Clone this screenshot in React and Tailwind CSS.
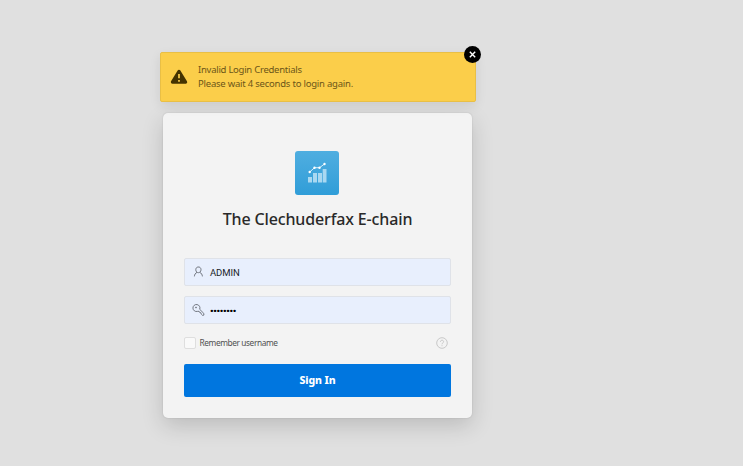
function Alert() {
  return (
    <div role="alert" className="relative flex h-[50px] w-[316px] items-center rounded-[2px] border border-[#e9bf45] bg-[#fbce4a] pl-[9px] shadow-[0_4px_12px_rgba(0,0,0,0.09)]">
      <svg width="18" height="16" viewBox="0 0 18 16" className="shrink-0">
        <path d="M9 2.4 15.6 13.1H2.4Z" fill="#443300" stroke="#443300" strokeWidth="3.2" strokeLinejoin="round" />
        <path d="M9 4.9V9.3M9 11V12.8" stroke="#fbce4a" strokeWidth="1.7" />
      </svg>
      <div className="ml-[10px] text-[9.5px] leading-[14px] text-[#6b5518]">
        <p className="w-max tracking-[-0.26px]">Invalid Login Credentials</p>
        <p className="w-max tracking-[-0.22px]">Please wait 4 seconds to login again.</p>
      </div>
      <button aria-label="Close" className="absolute -top-[7px] -right-[6px] flex size-[17px] items-center justify-center rounded-full bg-black">
        <svg width="7" height="7" viewBox="0 0 7 7">
          <path d="M0.8 0.8 6.2 6.2M6.2 0.8 0.8 6.2" stroke="#fff" strokeWidth="1.4" />
        </svg>
      </button>
    </div>
  );
}

function Logo() {
  return (
    <div className="size-[44px] rounded-[3px] bg-linear-to-b from-[#4faee0] to-[#2f9dd8]">
      <svg width="44" height="44" viewBox="0 0 44 44">
        <path d="M13 26h4v5.5h-4zM18 22h4v9.5h-4zM23 22h4v9.5h-4zM27.7 18h3.8v13.5h-3.8z" fill="#a9d8f1" />
        <path d="M14.7 21 19.5 16.7H24.5L29.5 13" fill="none" stroke="#d9eefa" strokeWidth="1" />
        <g fill="#fff">
          <circle cx="14.7" cy="21" r="1.2" />
          <circle cx="19.5" cy="16.7" r="1.2" />
          <circle cx="24.5" cy="16.7" r="1.2" />
          <circle cx="29.5" cy="13" r="1.2" />
        </g>
      </svg>
    </div>
  );
}

function Field({ icon, children }) {
  return (
    <div className="flex h-[28px] w-full items-center rounded-[2px] border border-[#dfe2e8] bg-[#e8effd] pl-[8px]">
      {icon}
      <div className="ml-[5px] flex items-center pt-[2px] text-[#20242a]">{children}</div>
    </div>
  );
}

const userIcon = (
  <svg width="12" height="12" viewBox="0 0 12 12" fill="none" stroke="#656a73" strokeWidth="0.9">
    <path d="M5 1C6.8 0.7 8 2 8 3.7C8 5.5 6.8 6.7 5.4 6.7C3.9 6.7 2.8 5.5 2.8 3.7C2.8 2.2 3.7 1.1 5 1Z" />
    <path d="M1.4 10.4C1.5 8.6 2.4 7.2 4 6.3M9.4 10.4C9.3 8.6 8.4 7.2 6.8 6.3" />
  </svg>
);

const keyIcon = (
  <svg width="12" height="12" viewBox="0 0 12 12" fill="none" stroke="#656a73" strokeWidth="0.9" strokeLinejoin="round" className="overflow-visible">
    <path d="M6.7 5.3A3.5 3.5 0 1 0 4.3 7.4L6.1 7.3 6.6 8.4 7.7 8.6 8.2 10 9.6 11.4 10.9 11.1 10.8 9.4Z" />
    <circle cx="3" cy="3.5" r="0.5" />
  </svg>
);

export default function App() {
  return (
    <main className="h-[466px] w-[743px] overflow-hidden bg-[#e0e0e0] pt-[52px] pl-[160px] font-['Noto_Sans','Open_Sans',sans-serif]">
      <Alert />
      <section className="mt-[11px] ml-[3px] flex h-[305px] w-[309px] flex-col rounded-[5px] bg-[#f3f3f3] pt-[38px] pr-[21px] pl-[21px] shadow-[0_8px_22px_rgba(0,0,0,0.16),0_0_2px_rgba(0,0,0,0.14)]">
        <div className="flex justify-center pr-px"><Logo /></div>
        <h1 className="mt-[12px] flex h-[24px] items-center justify-center text-[16px] font-medium tracking-[-0.14px] whitespace-nowrap text-[#292929]">The Clechuderfax E-chain</h1>
        <div className="mt-[27px] flex flex-col gap-[10px]">
          <Field icon={userIcon}><span className="font-[Roboto,sans-serif] text-[9.5px] tracking-[-0.1px]">ADMIN</span></Field>
          <Field icon={keyIcon}>
            <span className="font-[Roboto,sans-serif] text-[9.5px] font-black tracking-[-0.25px] text-black">••••••••</span>
          </Field>
        </div>
        <div className="mt-[13px] flex h-[12px] items-center">
          <span className="size-[12px] rounded-[2px] border border-[#dedede] bg-[#f9f9f9]" />
          <span className="ml-[3.5px] pt-px text-[8.3px] tracking-[-0.4px] whitespace-nowrap text-[#505050]">Remember username</span>
          <svg className="mr-[3px] ml-auto" width="12" height="12" viewBox="0 0 12 12" fill="none" stroke="#c8c8c8">
            <circle cx="6" cy="6" r="5.3" />
            <path d="M4.4 4.8C4.4 2.7 7.6 2.7 7.6 4.7C7.6 6 6 5.8 6 7.3M6 8.2V9.2" />
          </svg>
        </div>
        <button className="mt-[15px] flex h-[33px] w-full items-center justify-center rounded-[2px] bg-[#0076df] text-[10.5px] font-extrabold tracking-[-0.1px] text-white">Sign In</button>
      </section>
    </main>
  );
}
